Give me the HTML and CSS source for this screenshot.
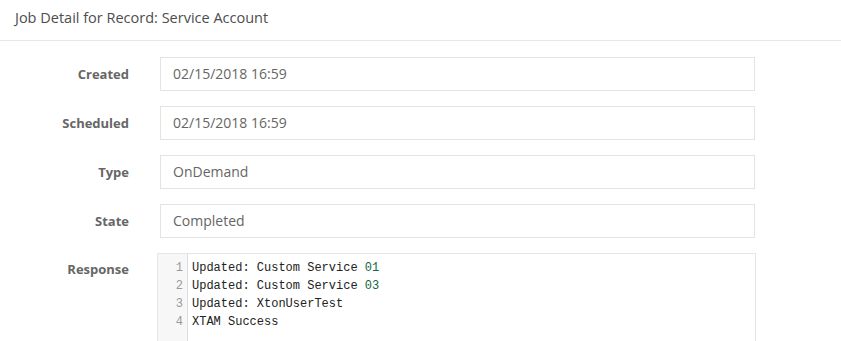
FILE: index.html
```html
<!DOCTYPE html>
<html lang="en">
	<head>
		<meta charset="UTF-8" />
		<meta name="viewport" content="width=device-width, initial-scale=1.0" />
		<title>Job Detail</title>

		<link rel="stylesheet" href="styles.css">
	</head>

	<body>
		<div class="panel-heading">Job Detail for Record: Service Account</div>

		<div class="form">
			<div class="row">
				<label class="label">Created</label>
				<div class="field">02/15/2018 16:59</div>
			</div>
			<div class="row">
				<label class="label">Scheduled</label>
				<div class="field">02/15/2018 16:59</div>
			</div>
			<div class="row">
				<label class="label">Type</label>
				<div class="field">OnDemand</div>
			</div>
			<div class="row">
				<label class="label">State</label>
				<div class="field">Completed</div>
			</div>
			<div class="row row-top">
				<label class="label label-top">Response</label>
				<div class="editor">
					<div class="gutter">
						<div>1</div>
						<div>2</div>
						<div>3</div>
						<div>4</div>
					</div>
					<div class="code">
						<div>Updated: Custom Service <span class="num">01</span></div>
						<div>Updated: Custom Service <span class="num">03</span></div>
						<div>Updated: XtonUserTest</div>
						<div>XTAM Success</div>
					</div>
				</div>
			</div>
		</div>
	</body>
</html>
```

FILE: styles.css
```css
body {
	margin: 0;
	font-family: "Open Sans", "Liberation Sans", sans-serif;
	color: #555;
	background: #fff;
}

.panel-heading {
	height: 41px;
	line-height: 36px;
	padding-left: 15px;
	font-size: 14.5px;
	color: #4d4d4d;
	border-bottom: 1px solid #e7e7e7;
	box-sizing: border-box;
}

.form {
	padding-top: 16px;
}

.row {
	display: flex;
	align-items: center;
	margin-bottom: 15px;
}

.row-top {
	align-items: flex-start;
	margin-bottom: 0;
}

.label {
	width: 129px;
	text-align: right;
	font-size: 13px;
	font-weight: bold;
	color: #666;
	margin-right: 31px;
}

.label-top {
	margin-top: 7px;
	margin-right: 28px;
}

.field {
	width: 595px;
	height: 34px;
	box-sizing: border-box;
	border: 1px solid #e3e3e3;
	padding: 0 12px;
	line-height: 32px;
	font-size: 14px;
	color: #666;
}

.editor {
	display: flex;
	width: 599px;
	height: 88px;
	box-sizing: border-box;
	border: 1px solid #e6e6e6;
	border-bottom: none;
	font-family: "Liberation Mono", "DejaVu Sans Mono", monospace;
	font-size: 12px;
	line-height: 18px;
	color: #222;
}

.gutter {
	width: 30px;
	background: #f7f7f7;
	border-right: 1px solid #ddd;
	text-align: right;
	padding: 5px 4px 0 0;
	box-sizing: border-box;
	color: #999;
}

.code {
	padding: 5px 0 0 4px;
}

.num {
	color: #164;
}
```
